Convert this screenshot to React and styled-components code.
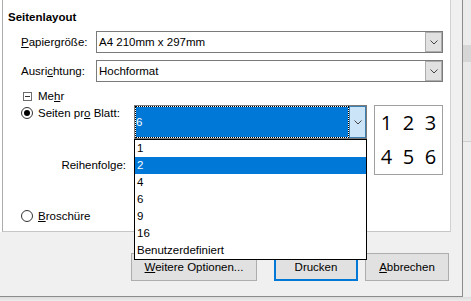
import styled, { createGlobalStyle } from "styled-components";

const GlobalStyle = createGlobalStyle`
  html, body {
    margin: 0;
    padding: 0;
    background: #ececec;
  }
  body {
    font-family: "Liberation Sans", Arial, sans-serif;
    font-size: 11.5px;
    color: #000;
  }
  * {
    box-sizing: border-box;
  }
`;

const pageOptions = ["1", "2", "4", "6", "9", "16", "Benutzerdefiniert"];

const Chevron = () => (
  <svg width="8" height="5" viewBox="0 0 8 5">
    <polyline points="0.5,0.5 4,4 7.5,0.5" fill="none" stroke="#444" strokeWidth="1" />
  </svg>
);

// label text with its access key underlined
const Key = ({ text, at }) => (
  <span>
    {text.slice(0, at)}
    <u>{text[at]}</u>
    {text.slice(at + 1)}
  </span>
);

const App = () => {
  return (
    <>
      <GlobalStyle />
      <Screen>
        <Top>
          <Dialog>
            <Panel>
              <Title>Seitenlayout</Title>
              <FieldRow $top={6}>
                <Label>
                  <Key text="Papiergröße:" at={0} />
                </Label>
                <Combo>
                  <ComboText>A4 210mm x 297mm</ComboText>
                  <ComboButton>
                    <Chevron />
                  </ComboButton>
                </Combo>
              </FieldRow>
              <FieldRow $top={7}>
                <Label>
                  <Key text="Ausrichtung:" at={5} />
                </Label>
                <Combo>
                  <ComboText>Hochformat</ComboText>
                  <ComboButton>
                    <Chevron />
                  </ComboButton>
                </Combo>
              </FieldRow>
              <MoreRow>
                <Collapse />
                <Key text="Mehr" at={2} />
              </MoreRow>
              <Group>
                <LeftCol>
                  <RadioRow>
                    <Radio $checked />
                    <Key text="Seiten pro Blatt:" at={9} />
                  </RadioRow>
                  <OrderLabel>Reihenfolge:</OrderLabel>
                  <RadioRow $top={35}>
                    <Radio />
                    <Key text="Broschüre" at={0} />
                  </RadioRow>
                </LeftCol>
                <ComboCol>
                  <OpenCombo>
                    <FocusField>6</FocusField>
                    <OpenButton>
                      <Chevron />
                    </OpenButton>
                  </OpenCombo>
                  <List>
                    {pageOptions.map((o) => (
                      <Item key={o} $active={o === "2"}>
                        {o}
                      </Item>
                    ))}
                  </List>
                </ComboCol>
                <Preview>
                  {["1", "2", "3", "4", "5", "6"].map((n) => (
                    <Digit key={n}>{n}</Digit>
                  ))}
                </Preview>
              </Group>
            </Panel>
            <ButtonRow>
              <Button $width={126}>
                <Key text="Weitere Optionen..." at={0} />
              </Button>
              <Button $width={84} $default>
                Drucken
              </Button>
              <Button $width={84}>
                <Key text="Abbrechen" at={0} />
              </Button>
            </ButtonRow>
          </Dialog>
          <Backdrop>
            <BackBand $h={45} $c="#ececec" />
            <BackBand $h={17} $c="#d6d6d6" />
            <BackBand $h={79} $c="#e9e9e9" />
            <BackBand $h={1} $c="#cfcfcf" />
            <BackBand $h={155} $c="#eeeeee" />
          </Backdrop>
        </Top>
        <Bottom />
      </Screen>
    </>
  );
};

export default App;

const Screen = styled.div`
  width: 471px;
  height: 301px;
  overflow: hidden;
  display: flex;
  flex-direction: column;
  background: #ececec;
`;

const Top = styled.div`
  display: flex;
  height: 297px;
`;

const Dialog = styled.div`
  width: 463px;
  height: 297px;
  background: #f0f0f0;
  border-right: 1px solid #8c8c8c;
  border-bottom: 1px solid #8c8c8c;
  display: flex;
  flex-direction: column;
`;

const Backdrop = styled.div`
  flex: 1;
  display: flex;
  flex-direction: column;
`;

const BackBand = styled.div`
  height: ${(p) => p.$h}px;
  background: ${(p) => p.$c};
`;

const Bottom = styled.div`
  flex: 1;
  background: linear-gradient(#dcdcdc, #ececec);
`;

const Panel = styled.div`
  margin-left: 2px;
  width: 449px;
  height: 232px;
  background: #fff;
  border-left: 1px solid #acacac;
  border-right: 1px solid #d2d2d2;
  border-bottom: 1px solid #c6c6c6;
  box-shadow: -2px 0 0 #fff;
  padding: 9px 0 0 5px;
`;

const Title = styled.div`
  height: 16px;
  line-height: 16px;
  font-weight: bold;
`;

const FieldRow = styled.div`
  display: flex;
  align-items: center;
  margin-top: ${(p) => p.$top}px;
  padding-left: 13px;
  height: 22px;
`;

const Label = styled.div`
  width: 75px;
  white-space: nowrap;
`;

const Combo = styled.div`
  width: 347px;
  height: 22px;
  display: flex;
  border: 1px solid #7a7a7a;
  background: #fff;
`;

const ComboText = styled.div`
  flex: 1;
  padding-left: 2px;
  line-height: 20px;
`;

const ComboButton = styled.div`
  width: 17px;
  height: 20px;
  background: #e1e1e1;
  border: 1px solid #adadad;
  display: flex;
  align-items: center;
  justify-content: center;
`;

const MoreRow = styled.div`
  display: flex;
  align-items: center;
  gap: 6px;
  margin-top: 6px;
  padding-left: 15px;
  height: 16px;
`;

const Collapse = styled.span`
  position: relative;
  width: 9px;
  height: 9px;
  border: 1px solid #6d6d6d;
  background: #fff;

  &::after {
    content: "";
    position: absolute;
    left: 1px;
    right: 1px;
    top: 3px;
    height: 1px;
    background: #333;
  }
`;

const Group = styled.div`
  display: flex;
  margin-top: 1px;
`;

const LeftCol = styled.div`
  width: 126px;
  display: flex;
  flex-direction: column;
`;

const RadioRow = styled.div`
  display: flex;
  align-items: center;
  gap: 5px;
  height: 16px;
  margin-top: ${(p) => p.$top || 0}px;
  padding-left: 13px;
  white-space: nowrap;
`;

const Radio = styled.span`
  position: relative;
  width: 12px;
  height: 12px;
  border-radius: 50%;
  border: 1px solid #333;
  background: #fff;

  &::after {
    content: "";
    display: ${(p) => (p.$checked ? "block" : "none")};
    position: absolute;
    left: 2px;
    top: 2px;
    width: 6px;
    height: 6px;
    border-radius: 50%;
    background: #000;
  }
`;

const OrderLabel = styled.div`
  margin-top: 36px;
  height: 16px;
  line-height: 16px;
  text-align: right;
  padding-right: 8px;
`;

const ComboCol = styled.div`
  position: relative;
  width: 233px;
`;

const OpenCombo = styled.div`
  height: 34px;
  display: flex;
  border: 1px solid #7a7a7a;
`;

const FocusField = styled.div`
  flex: 1;
  border: 1px dotted #000;
  background: linear-gradient(#0078d7, #0078d7) padding-box, #fff border-box;
  color: #fff;
  display: flex;
  align-items: center;
`;

const OpenButton = styled.div`
  width: 17px;
  background: #cce4f7;
  border: 1px solid #3c7fb1;
  display: flex;
  align-items: center;
  justify-content: center;
`;

const List = styled.div`
  position: absolute;
  top: 34px;
  left: 0;
  width: 233px;
  border: 1px solid #000;
  background: #fff;
  z-index: 2;
`;

const Item = styled.div`
  height: 17px;
  line-height: 17px;
  padding-left: 2px;
  background: ${(p) => (p.$active ? "#0078d7" : "#fff")};
  color: ${(p) => (p.$active ? "#fff" : "#000")};
`;

const Preview = styled.div`
  margin-left: 7px;
  width: 69px;
  height: 70px;
  border: 1px solid #a0a0a0;
  display: grid;
  grid-template-columns: repeat(3, 22px);
  grid-auto-rows: 34px;
  justify-content: center;
  align-content: center;
`;

const Digit = styled.div`
  font-family: "Open Sans", "Liberation Sans", sans-serif;
  font-size: 20px;
  line-height: 34px;
  text-align: center;
`;

const ButtonRow = styled.div`
  display: flex;
  margin-top: 21px;
  padding-left: 131px;
  gap: 7px;

  & > :first-child {
    margin-right: 10px;
  }
`;

const Button = styled.div`
  width: ${(p) => p.$width}px;
  height: 28px;
  background: #e1e1e1;
  border: ${(p) => (p.$default ? "2px solid #0078d7" : "1px solid #adadad")};
  display: flex;
  align-items: center;
  justify-content: center;
  white-space: nowrap;
`;
